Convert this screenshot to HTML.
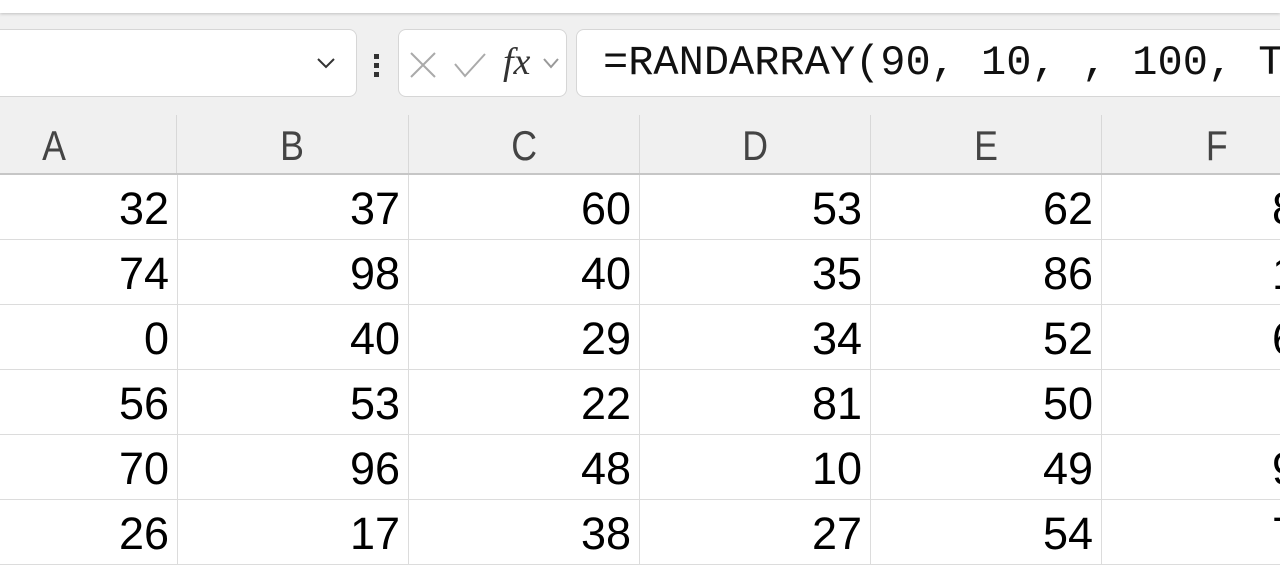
<!DOCTYPE html>
<html><head><style>
*{margin:0;padding:0;box-sizing:border-box}
body{width:1280px;height:561px;overflow:hidden;background:#f0f0f0;position:relative;font-family:"Liberation Sans",sans-serif}
.top{position:absolute;left:0;top:0;width:1280px;height:13px;background:#fff;box-shadow:0 1px 3px rgba(0,0,0,.2)}
.box{position:absolute;top:29px;height:68px;background:#fff;border:1px solid #d6d6d6;border-radius:8px}
.hdr{position:absolute;top:115px;left:0;width:1280px;height:60px;border-bottom:2px solid #c6c6c6}
.hc{position:absolute;top:0;height:58px;border-right:1px solid #d8d8d8;text-align:center;font-size:42px;color:#444;line-height:62px}
.hc span{display:inline-block;transform:scaleX(0.85)}
.grid{position:absolute;top:175px;left:0;width:1280px;height:400px;background:#fff}
.c{position:absolute;height:65px;border-right:1px solid #dcdcdc;border-bottom:1px solid #dcdcdc;text-align:right;padding-right:8px;font-size:45px;line-height:68px;color:#000;overflow:hidden;white-space:nowrap}
</style></head><body>
<div class="top"></div>
<div class="box" style="left:-10px;width:367px">
<svg style="position:absolute;left:324px;top:26px" width="22" height="14"><path d="M3 3 L11 11 L19 3" fill="none" stroke="#333" stroke-width="2"/></svg>
</div>
<div style="position:absolute;left:374px;top:54px;width:5px;height:5px;background:#333"></div>
<div style="position:absolute;left:374px;top:63px;width:5px;height:5px;background:#333"></div>
<div style="position:absolute;left:374px;top:72px;width:5px;height:5px;background:#333"></div>
<div class="box" style="left:398px;width:169px">
<svg style="position:absolute;left:10px;top:21px" width="30" height="30"><path d="M2 2 L26 26 M26 2 L2 26" stroke="#aaa" stroke-width="2"/></svg>
<svg style="position:absolute;left:54px;top:22px" width="36" height="28"><path d="M2 12 L12 24 L32 2" fill="none" stroke="#aaa" stroke-width="2"/></svg>
<span style="position:absolute;left:104px;top:10px;font-family:'Liberation Serif',serif;font-style:italic;font-size:38px;color:#333">fx</span>
<svg style="position:absolute;left:143px;top:27px" width="20" height="14"><path d="M2 2 L9 10 L16 2" fill="none" stroke="#999" stroke-width="2"/></svg>
</div>
<div class="box" style="left:576px;width:740px;overflow:hidden">
<span style="position:absolute;left:26px;top:9px;font-family:'Liberation Mono',monospace;font-size:42px;color:#111;white-space:nowrap">=RANDARRAY(90, 10, , 100, T</span>
</div>
<div class="hdr">
<div class="hc" style="left:-67px;width:244px"><span>A</span></div>
<div class="hc" style="left:177px;width:232px"><span>B</span></div>
<div class="hc" style="left:409px;width:231px"><span>C</span></div>
<div class="hc" style="left:640px;width:231px"><span>D</span></div>
<div class="hc" style="left:871px;width:231px"><span>E</span></div>
<div class="hc" style="left:1102px;width:231px"><span>F</span></div>
</div>
<div class="grid" id="g"></div>
<script>
var d=[[32,37,60,53,62,8],[74,98,40,35,86,1],[0,40,29,34,52,6],[56,53,22,81,50,""],[70,96,48,10,49,9],[26,17,38,27,54,7]];
var xs=[-55,177,409,640,871,1102],ws=[233,232,231,231,231,231];
var h="";
for(var r=0;r<6;r++)for(var c=0;c<6;c++){
var txt=d[r][c];var pr=c==5?"padding-right:0;text-align:left;padding-left:170px":"";
h+='<div class="c" style="left:'+xs[c]+'px;top:'+(r*65)+'px;width:'+ws[c]+'px;'+pr+'">'+txt+'</div>';}
document.getElementById('g').innerHTML=h;
</script>
</body></html>
